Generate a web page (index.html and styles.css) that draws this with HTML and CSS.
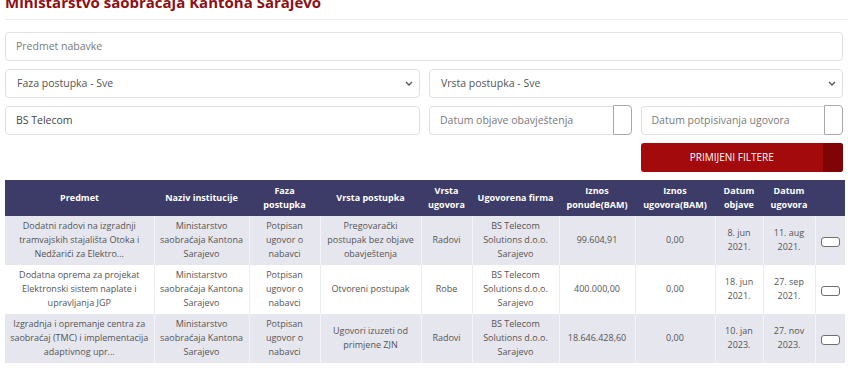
FILE: index.html
```html
<!DOCTYPE html>
<html lang="bs">
<head>
<meta charset="utf-8">
<title>Ministarstvo saobraćaja Kantona Sarajevo</title>
<link rel="stylesheet" href="styles.css">
</head>
<body>
<div class="page">
  <h1 class="title">Ministarstvo saobraćaja Kantona Sarajevo</h1>

  <div class="filters">
    <div class="field full"><span class="ph">Predmet nabavke</span></div>

    <div class="row2">
      <div class="field select"><span class="val">Faza postupka - Sve</span>
        <svg class="chev" width="8" height="5" viewBox="0 0 8 5"><path d="M1 1l3 3 3-3" fill="none" stroke="#555" stroke-width="1.3"/></svg>
      </div>
      <div class="field select"><span class="val">Vrsta postupka - Sve</span>
        <svg class="chev" width="8" height="5" viewBox="0 0 8 5"><path d="M1 1l3 3 3-3" fill="none" stroke="#555" stroke-width="1.3"/></svg>
      </div>
    </div>

    <div class="row2">
      <div class="field"><span class="val dark">BS Telecom</span></div>
      <div class="row2">
        <div class="group">
          <div class="field gfield"><span class="ph">Datum objave obavještenja</span></div>
          <div class="addon"></div>
        </div>
        <div class="group">
          <div class="field gfield"><span class="ph">Datum potpisivanja ugovora</span></div>
          <div class="addon"></div>
        </div>
      </div>
    </div>

    <div class="row2">
      <div></div>
      <div class="row2">
        <div></div>
        <div class="btn"><span class="btn-main">PRIMIJENI FILTERE</span><span class="btn-end"></span></div>
      </div>
    </div>
  </div>

  <table class="tbl">
    <colgroup>
      <col style="width:149px"><col style="width:95px"><col style="width:71px"><col style="width:101px">
      <col style="width:51px"><col style="width:87px"><col style="width:76px"><col style="width:80px">
      <col style="width:48px"><col style="width:52px"><col style="width:30px">
    </colgroup>
    <thead>
      <tr>
        <th>Predmet</th><th>Naziv institucije</th><th>Faza<br>postupka</th><th>Vrsta postupka</th>
        <th>Vrsta<br>ugovora</th><th>Ugovorena firma</th><th>Iznos<br>ponude(BAM)</th><th>Iznos<br>ugovora(BAM)</th>
        <th>Datum<br>objave</th><th>Datum<br>ugovora</th><th></th>
      </tr>
    </thead>
    <tbody>
      <tr class="odd">
        <td>Dodatni radovi na izgradnji tramvajskih stajališta Otoka i Nedžarići za Elektro...</td>
        <td>Ministarstvo saobraćaja Kantona Sarajevo</td>
        <td>Potpisan ugovor o nabavci</td>
        <td>Pregovarački postupak bez objave obavještenja</td>
        <td>Radovi</td>
        <td>BS Telecom Solutions d.o.o. Sarajevo</td>
        <td>99.604,91</td>
        <td>0,00</td>
        <td>8. jun 2021.</td>
        <td>11. aug 2021.</td>
        <td><span class="rbtn"></span></td>
      </tr>
      <tr>
        <td>Dodatna oprema za projekat Elektronski sistem naplate i upravljanja JGP</td>
        <td>Ministarstvo saobraćaja Kantona Sarajevo</td>
        <td>Potpisan ugovor o nabavci</td>
        <td>Otvoreni postupak</td>
        <td>Robe</td>
        <td>BS Telecom Solutions d.o.o. Sarajevo</td>
        <td>400.000,00</td>
        <td>0,00</td>
        <td>18. jun 2021.</td>
        <td>27. sep 2021.</td>
        <td><span class="rbtn"></span></td>
      </tr>
      <tr class="odd">
        <td>Izgradnja i opremanje centra za saobraćaj (TMC) i implementacija adaptivnog upr...</td>
        <td>Ministarstvo saobraćaja Kantona Sarajevo</td>
        <td>Potpisan ugovor o nabavci</td>
        <td>Ugovori izuzeti od primjene ZJN</td>
        <td>Radovi</td>
        <td>BS Telecom Solutions d.o.o. Sarajevo</td>
        <td>18.646.428,60</td>
        <td>0,00</td>
        <td>10. jan 2023.</td>
        <td>27. nov 2023.</td>
        <td><span class="rbtn"></span></td>
      </tr>
    </tbody>
  </table>
</div>
</body>
</html>
```

FILE: styles.css
```css
* { box-sizing: border-box; }
html, body { margin: 0; padding: 0; background: #fff; }
body {
  font-family: "Open Sans", "Noto Sans", sans-serif;
  color: #555;
  overflow: hidden;
}
.page {
  padding: 0 5px;
}
.title {
  margin: -8.5px -5px 0 0;
  padding: 0 0 7px 0;
  font-size: 15px;
  font-weight: 700;
  color: #8c1014;
  border-bottom: 1px solid #ececec;
  line-height: 20.4px;
  white-space: nowrap;
}
.filters {
  margin-top: 12px;
  display: flex;
  flex-direction: column;
  gap: 8px;
}
.row2 {
  display: grid;
  grid-template-columns: 1fr 1fr;
  gap: 9px;
}
.filters > .row2 {
  grid-template-columns: 415px 1fr;
}
.field {
  height: 29px;
  border: 1px solid #e1e1e1;
  border-radius: 4px;
  background: #fff;
  display: flex;
  align-items: center;
  padding: 0 10px;
  font-size: 10.5px;
}
.ph { color: #7a7a7a; }
.val { color: #555; }
.val.dark { color: #444; }
.select { justify-content: space-between; padding-right: 6px; }
.select .val { padding-left: 1px; }
.chev { display: block; }
.group {
  display: flex;
  height: 29px;
}
.gfield {
  flex: 1;
  border-radius: 4px 0 0 4px;
  border-right: none;
}
.addon {
  width: 19px;
  height: 30px;
  margin-top: -1px;
  border: 1px solid #a9a9a9;
  border-radius: 0 4px 4px 0;
  background: #fff;
}
.btn {
  height: 29px;
  border-radius: 3px;
  background: #a30a0c;
  display: flex;
  color: #fff;
  font-size: 10px;
  overflow: hidden;
}
.btn-main {
  flex: 1;
  display: flex;
  align-items: center;
  justify-content: center;
}
.btn-end {
  width: 20px;
  background: #800406;
}
.tbl {
  margin-top: 8px;
  width: 840px;
  border-collapse: collapse;
  table-layout: fixed;
  font-size: 9px;
  line-height: 14px;
}
.tbl th {
  background: #3d3b68;
  color: #fff;
  font-weight: 700;
  height: 36px;
  padding: 0 2px;
  text-align: center;
  vertical-align: middle;
}
.tbl td {
  height: 49px;
  padding: 0 3px;
  text-align: center;
  vertical-align: middle;
  color: #555;
  border-left: 1px solid #ececf1;
}
.tbl td:first-child { border-left: none; }
.tbl tr.odd td { background: #e6e6ee; border-left-color: #f4f4f8; }
.tbl tr.odd td:first-child { border-left: none; }
.rbtn {
  display: inline-block;
  width: 19px;
  height: 10px;
  border: 1px solid #6f6f6f;
  border-radius: 3px;
  background: #fff;
  vertical-align: middle;
  margin-top: 2px;
}
```
